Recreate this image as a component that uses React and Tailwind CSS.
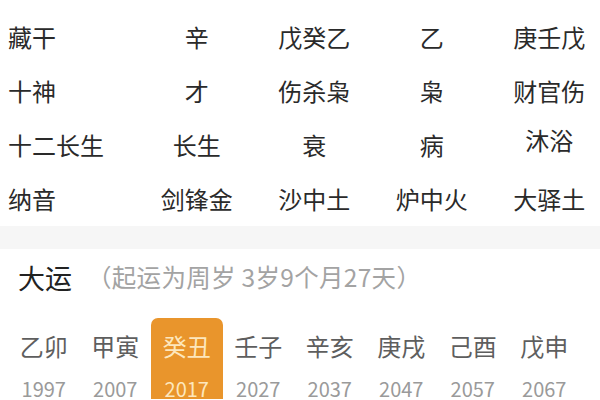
import React from "react";

const rows = [
  ["藏干", "辛", "戊癸乙", "乙", "庚壬戊"],
  ["十神", "才", "伤杀枭", "枭", "财官伤"],
  ["十二长生", "长生", "衰", "病", "沐浴"],
  ["纳音", "剑锋金", "沙中土", "炉中火", "大驿土"],
];

const yun = [
  ["乙卯", "1997"],
  ["甲寅", "2007"],
  ["癸丑", "2017"],
  ["壬子", "2027"],
  ["辛亥", "2037"],
  ["庚戌", "2047"],
  ["己酉", "2057"],
  ["戊申", "2067"],
];

export default function App() {
  return (
    <div
      className="w-[600px] h-[400px] overflow-hidden bg-white text-[#2a2a2a]"
      style={{ fontFamily: '"Noto Sans CJK SC", "Noto Sans", sans-serif' }}
    >
      <div className="pt-[10px]">
        {rows.map((r, i) => (
          <div key={i} className="flex h-[54px] items-center text-[24px] leading-none">
            <div className="w-[138px] shrink-0 pl-[8px]">{r[0]}</div>
            {r.slice(1).map((c, j) => (
              <div
                key={j}
                className={
                  "w-[117.5px] shrink-0 text-center " + (i === 2 && j === 3 ? "-translate-y-[5px]" : "")
                }
              >
                {c}
              </div>
            ))}
          </div>
        ))}
      </div>
      <div className="h-[23px] bg-[#f6f6f6]" />
      <div className="flex h-[56px] items-center pl-[18px]">
        <span className="text-[27px] leading-none text-[#222]">大运</span>
        <span className="ml-[15px] text-[24.5px] leading-none tracking-[0.3px] text-[#a3a3a3]">（起运为周岁 3岁9个月27天）</span>
      </div>
      <div className="flex pl-[8px] pt-[13px]">
        {yun.map(([g, y], i) => (
          <div
            key={i}
            className={
              "flex w-[71.5px] shrink-0 flex-col items-center " +
              (i === 2 ? "rounded-t-[7px] bg-[#e9952c] text-[#fde7bd]" : "")
            }
          >
            <div className={"pt-[16px] text-[24px] leading-none " + (i === 2 ? "" : "text-[#5e5e5e]")}>{g}</div>
            <div className={"pt-[21px] text-[20px] leading-none " + (i === 2 ? "" : "text-[#9a9a9a]")}>{y}</div>
          </div>
        ))}
      </div>
    </div>
  );
}
